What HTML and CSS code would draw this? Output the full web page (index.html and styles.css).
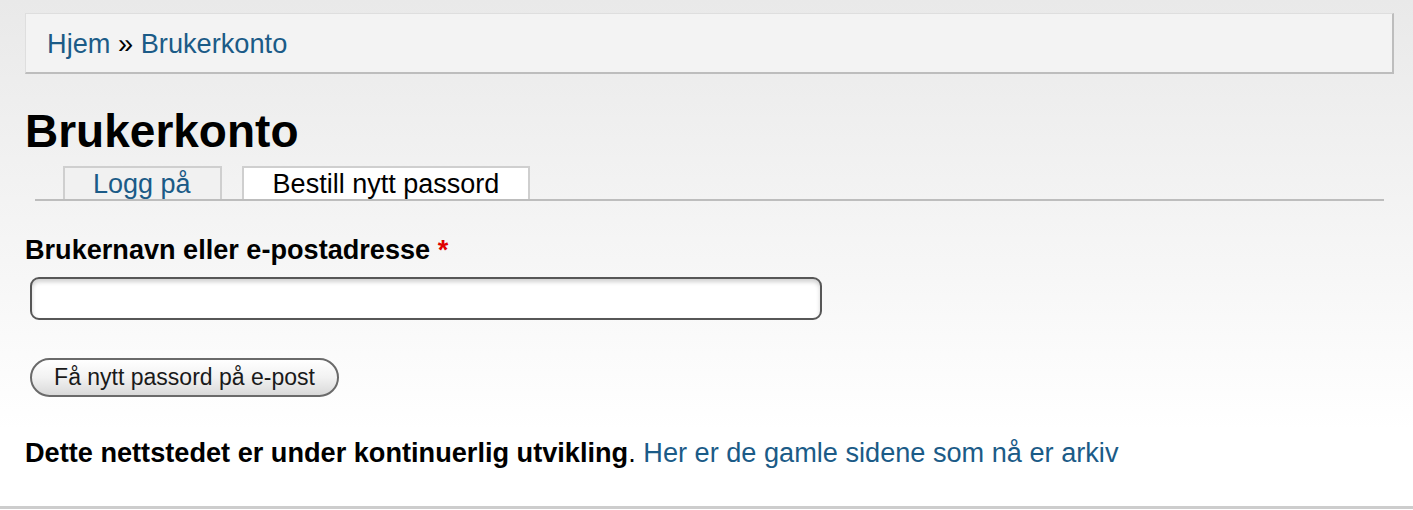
FILE: index.html
```html
<!DOCTYPE html>
<html lang="no">
<head>
<meta charset="utf-8">
<title>Brukerkonto</title>
<link rel="stylesheet" href="styles.css">
</head>
<body>
<div class="page">
  <nav class="breadcrumb"><a href="#">Hjem</a> » <a href="#">Brukerkonto</a></nav>
  <h1 class="title">Brukerkonto</h1>
  <ul class="tabs">
    <li class="tab"><a href="#">Logg på</a></li>
    <li class="tab active"><a href="#">Bestill nytt passord</a></li>
  </ul>
  <form class="form">
    <label class="label" for="name">Brukernavn eller e-postadresse <span class="req">*</span></label>
    <input class="input" id="name" type="text">
    <button class="btn" type="button">Få nytt passord på e-post</button>
  </form>
  <p class="note"><strong>Dette nettstedet er under kontinuerlig utvikling</strong>. <a href="#">Her er de gamle sidene som nå er arkiv</a></p>
</div>
<div class="bottom-line"></div>
</body>
</html>
```

FILE: styles.css
```css
html, body {
  margin: 0;
  padding: 0;
}
body {
  font-family: "Liberation Sans", Arial, Helvetica, sans-serif;
  color: #000;
  background: linear-gradient(to bottom, #e9e9e9 0px, #f6f6f6 260px, #ffffff 430px, #ffffff 100%);
  height: 510px;
  overflow: hidden;
}
a {
  color: #1b5b87;
  text-decoration: none;
}
.page {
  padding: 13px 19px 0 25px;
}
.breadcrumb {
  background: #f3f3f3;
  border-style: solid;
  border-width: 1px 2px 2px 1px;
  border-color: #dedede #bdbdbd #bdbdbd #dedede;
  height: 44px;
  padding: 14px 0 0 21px;
  font-size: 27.2px;
  line-height: 32px;
  box-sizing: content-box;
}
.title {
  margin: 34px 0 0 0;
  font-size: 46px;
  line-height: 46px;
  font-weight: bold;
}
.tabs {
  list-style: none;
  margin: 12px 10px 0 10px;
  padding: 0 0 0 28px;
  display: flex;
  gap: 20px;
  border-bottom: 2px solid #bdbdbd;
}
.tab {
  height: 31px;
  border: 2px solid #cfcfcf;
  border-bottom: 0;
  background: #f1f1f1;
  font-size: 27px;
  line-height: 33px;
}
.tab a {
  display: block;
  padding: 0 29px 0 28px;
}
.tab.active {
  background: #fff;
}
.tab.active a {
  color: #000;
  padding: 0 29px 0 29px;
}
.form {
  display: flex;
  flex-direction: column;
  align-items: flex-start;
  margin-top: 33px;
}
.label {
  font-size: 27.1px;
  line-height: 32px;
  font-weight: bold;
}
.req {
  color: #e00000;
}
.input {
  margin: 11px 0 0 5px;
  width: 792px;
  height: 43px;
  box-sizing: border-box;
  border: 2px solid #575757;
  border-radius: 9px;
  background: #fff;
  box-shadow: inset 0 3px 4px rgba(0, 0, 0, 0.18);
  font: inherit;
}
.btn {
  margin: 38px 0 0 5px;
  width: 309px;
  height: 39px;
  box-sizing: border-box;
  border: 2px solid #6a6a6a;
  border-radius: 20px;
  background: linear-gradient(to bottom, #ffffff 0%, #f2f2f2 50%, #d9d9d9 100%);
  font-family: "Liberation Sans", Arial, Helvetica, sans-serif;
  font-size: 23px;
  color: #1a1a1a;
  padding: 0;
  line-height: 35px;
}
.note {
  margin: 40px 0 0 0;
  font-size: 27.15px;
  line-height: 32px;
}
.note strong {
  font-weight: bold;
}
.bottom-line {
  margin-top: 37px;
  border-top: 3px solid #cdcdcd;
}
```
